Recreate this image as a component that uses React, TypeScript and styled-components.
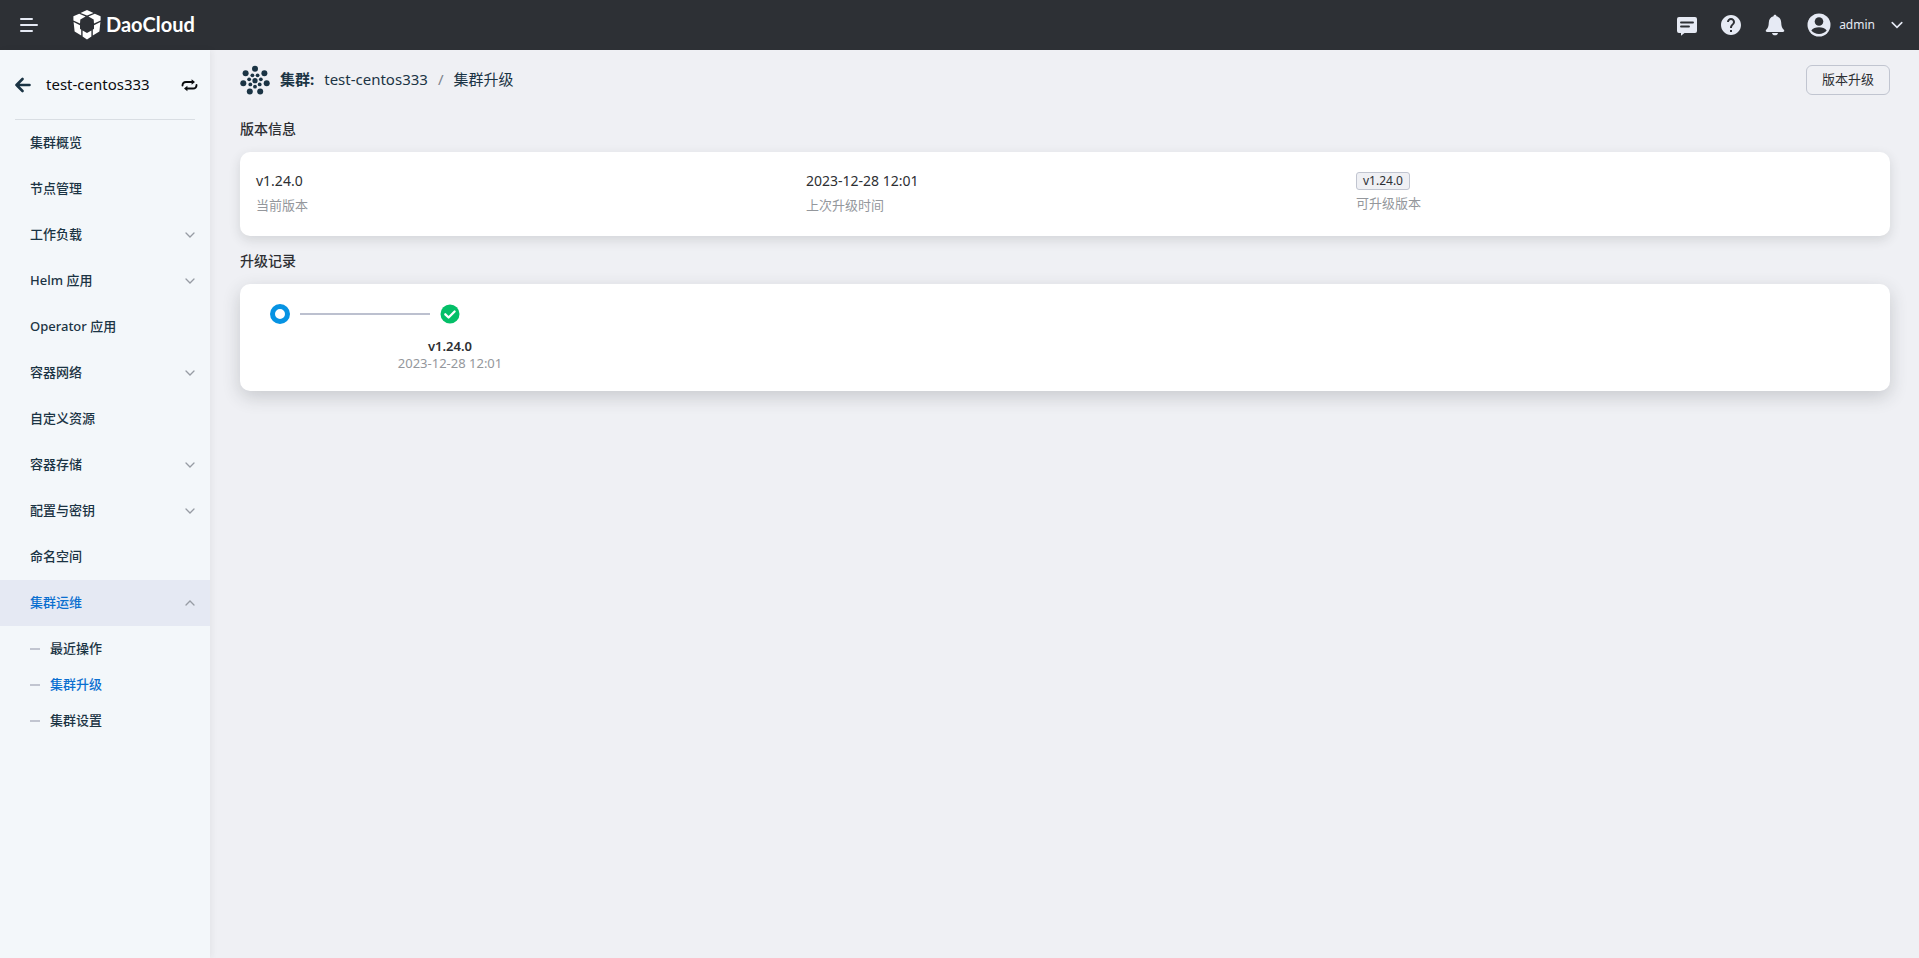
import React from 'react';
import styled, { createGlobalStyle } from 'styled-components';

const GlobalStyle = createGlobalStyle`
  * { box-sizing: border-box; }
  body {
    margin: 0;
    background: #eff0f4;
    color: #2d2f33;
    font-family: 'Noto Sans', 'Noto Sans CJK SC', sans-serif;
    font-size: 13px;
    line-height: 20px;
  }
  button { font: inherit; color: inherit; background: none; border: 0; padding: 0; cursor: pointer; }
  a { color: inherit; text-decoration: none; }
  svg { display: block; flex: none; }
  h1, h2, p, ul, ol, dl, dd { margin: 0; padding: 0; }
  ul, ol { list-style: none; }
`;

const Page = styled.div`
  min-height: 100vh;
  display: flex;
  flex-direction: column;
`;

const TopBar = styled.header`
  height: 50px;
  display: flex;
  align-items: center;
  padding: 0 16px 0 20px;
  background: #2d3035;
  color: #e6eaf4;
`;

const Brand = styled.a`
  display: flex;
  align-items: center;
  gap: 5px;
  margin-left: 35px;
  color: #fff;
  font-family: Lato, 'Noto Sans', sans-serif;
  font-size: 20px;
  line-height: 30px;
  font-weight: 700;
`;

const BrandName = styled.span`
  padding-bottom: 2px;
`;

const TopActions = styled.div`
  display: flex;
  align-items: center;
  gap: 20px;
  margin-left: auto;
`;

const UserButton = styled.button`
  display: flex;
  align-items: center;
  gap: 8px;
  font-size: 12px;
`;

const UserName = styled.span`
  margin-right: 8px;
`;

const Body = styled.div`
  flex: 1;
  display: grid;
  grid-template-columns: 210px minmax(0, 1fr);
`;

const Sidebar = styled.aside`
  background: #f3f7fa;
  box-shadow: 2px 0 6px rgba(45, 48, 53, 0.06);
  color: #1b3444;
`;

const SidebarHead = styled.div`
  display: flex;
  align-items: center;
  height: 70px;
  margin: 0 15px;
  border-bottom: 1px solid #d9dee3;
`;

const ClusterName = styled.span`
  flex: 1;
  margin-left: 15px;
  padding-bottom: 2px;
  color: #0b0c0e;
  font-size: 15px;
`;

const SwapButton = styled.button`
  margin-right: -3px;
`;

const NavLabel = styled.span`
  padding-bottom: 2px;
`;

const NavRow = styled.a<{ $active?: boolean }>`
  display: flex;
  align-items: center;
  justify-content: space-between;
  width: 100%;
  height: 46px;
  padding: 0 15px 0 30px;
  font-weight: 500;
  background: ${(p) => (p.$active ? '#e5e9f3' : 'transparent')};
  color: ${(p) => (p.$active ? '#0a6fd0' : 'inherit')};
`;

const SubNav = styled.ul`
  padding: 5px 0;
`;

const SubLink = styled.a<{ $active?: boolean }>`
  display: flex;
  align-items: center;
  gap: 10px;
  height: 36px;
  padding-left: 30px;
  font-weight: 500;
  color: ${(p) => (p.$active ? '#0a6fd0' : 'inherit')};

  &::before {
    content: '';
    width: 10px;
    height: 2px;
    background: #c1c5d0;
  }
`;

const Main = styled.main`
  padding: 15px 29px 30px 30px;
`;

const PageHead = styled.div`
  display: flex;
  align-items: center;
  justify-content: space-between;
  height: 30px;
  margin-bottom: 9px;
`;

const Crumbs = styled.nav`
  display: flex;
  align-items: center;
  gap: 10px;
  color: #1b3444;
  font-size: 15px;
`;

const CrumbTitle = styled.h1`
  padding-bottom: 2px;
  font-size: 15px;
  font-weight: 700;
`;

const Crumb = styled.a`
  padding-bottom: 2px;
`;

const Slash = styled.span`
  padding-bottom: 2px;
  color: #7d838c;
`;

const OutlineButton = styled.button`
  height: 30px;
  padding: 0 15px 2px;
  border: 1px solid #c1c5d0;
  border-radius: 6px;
`;

const SectionTitle = styled.h2`
  padding-top: 2px;
  font-size: 14px;
  font-weight: 500;
  line-height: 46px;
`;

const InfoCard = styled.dl`
  display: grid;
  grid-template-columns: repeat(3, 1fr);
  height: 84px;
  padding-top: 18px;
  border-radius: 10px;
  background: #fff;
  box-shadow: 0 4px 12px rgba(45, 48, 53, 0.14);
`;

const InfoItem = styled.div`
  display: flex;
  flex-direction: column-reverse;
  justify-content: flex-end;
  align-items: flex-start;
  gap: 3px;
  padding: 0 16px;
`;

const InfoLabel = styled.dt`
  color: #94979c;
`;

const InfoValue = styled.dd`
  font-size: 14px;
  line-height: 22px;
`;

const TagValue = styled.dd`
  margin-top: 2px;
  padding: 0 6px;
  border: 1px solid #c1c5d0;
  border-radius: 3px;
  background: #eff0f4;
  font-size: 12px;
  line-height: 16px;
`;

const HistoryCard = styled.ol`
  display: flex;
  align-items: flex-start;
  height: 107px;
  padding: 20px 30px;
  border-radius: 10px;
  background: #fff;
  box-shadow: 0 6px 18px rgba(45, 48, 53, 0.2);
`;

const Start = styled.li`
  width: 20px;
  height: 20px;
  border: 5px solid #0693e3;
  border-radius: 50%;
`;

const Connector = styled.li`
  width: 130px;
  height: 2px;
  margin: 9px 0 0 10px;
  background: #bcc0cf;
`;

const Step = styled.li`
  display: flex;
  flex-direction: column;
  align-items: center;
  width: 120px;
  margin-left: -40px;
`;

const StepVersion = styled.strong`
  margin-top: 13px;
  font-weight: 600;
  line-height: 18px;
`;

const StepTime = styled.time`
  color: #94979c;
  font-size: 13px;
  line-height: 16px;
`;

const Chevron = ({ up, size = 10, color = '#979ca4' }: { up?: boolean; size?: number; color?: string }) => (
  <svg width={size} height={size} viewBox="0 0 10 10" fill="none" stroke={color} strokeWidth="1.3" strokeLinecap="round">
    <path d={up ? 'M1 7 5 3l4 4' : 'm1 3 4 4 4-4'} />
  </svg>
);

const ring = (count: number, radius: number, turn: number) =>
  Array.from({ length: count }, (_, i) => {
    const a = ((i + turn) / count) * Math.PI * 2;
    return [15 + radius * Math.sin(a), 15.7 - radius * Math.cos(a)];
  });

const ClusterIcon = () => (
  <svg width="30" height="30" viewBox="0 0 30 30" fill="#1b3444">
    <circle cx="15" cy="15.7" r="2.6" />
    {ring(7, 12, 0).map(([x, y]) => <circle key={x} cx={x} cy={y} r="3" />)}
    {ring(7, 6, 0.5).map(([x, y]) => <circle key={x} cx={x} cy={y} r="1.9" />)}
  </svg>
);

const LogoIcon = () => (
  <svg width="28" height="30" viewBox="0 0 28 30" fill="#fff">
    <path d="M14 0 20.500 2.900 14 5.600 7.500 2.900Z" />
    <path d="M6.200 3.700 12.600 6.500 7.300 9.400 7 13.600 .4 10.400V6.200Z" />
    <path d="M21.800 3.700 15.400 6.500 20.700 9.400 21 13.600 27.600 10.400V6.200Z" />
    <path d="M.6 12 7 15.300V18.800L8.200 19.700V25.600L1.600 21.400Z" />
    <path d="M27.400 12 21 15.300V18.800L19.800 19.700V25.600L26.400 21.400Z" />
    <path d="M9.600 20.600 14 23 18.400 20.600V26.500L14 29.400 9.600 26.500Z" />
  </svg>
);

const nav: { label: string; expandable?: boolean; active?: boolean }[] = [
  { label: '集群概览' },
  { label: '节点管理' },
  { label: '工作负载', expandable: true },
  { label: 'Helm 应用', expandable: true },
  { label: 'Operator 应用' },
  { label: '容器网络', expandable: true },
  { label: '自定义资源' },
  { label: '容器存储', expandable: true },
  { label: '配置与密钥', expandable: true },
  { label: '命名空间' },
  { label: '集群运维', expandable: true, active: true },
];

const subNav = [
  { label: '最近操作' },
  { label: '集群升级', active: true },
  { label: '集群设置' },
];

export default function App() {
  return (
    <Page>
      <GlobalStyle />
      <TopBar>
        <button aria-label="菜单">
          <svg width="18" height="14" viewBox="0 0 18 14" stroke="#e6eaf4" strokeWidth="2" strokeLinecap="round">
            <path d="M1 1h11M1 7h16M1 13h11" />
          </svg>
        </button>
        <Brand href="#"><LogoIcon /><BrandName>DaoCloud</BrandName></Brand>
        <TopActions>
          <button aria-label="消息">
            <svg width="24" height="24" viewBox="0 0 24 24">
              <path fill="#e6eaf4" d="M4 4h16a2 2 0 0 1 2 2v12a2 2 0 0 1-2 2H9.5L6 22.7V20H4a2 2 0 0 1-2-2V6a2 2 0 0 1 2-2Z" />
              <path stroke="#2d3035" strokeWidth="1.9" strokeLinecap="round" d="M6 9.5h12M6 13.5h8" />
            </svg>
          </button>
          <button aria-label="帮助">
            <svg width="24" height="24" viewBox="0 0 24 24">
              <path fill="#e6eaf4" d="M12 2C6.48 2 2 6.48 2 12s4.48 10 10 10 10-4.48 10-10S17.52 2 12 2zm1 17h-2v-2h2v2zm2.07-7.75-.9.92C13.45 12.9 13 13.5 13 15h-2v-.5c0-1.1.45-2.1 1.17-2.83l1.24-1.26c.37-.36.59-.86.59-1.41 0-1.1-.9-2-2-2s-2 .9-2 2H8c0-2.21 1.79-4 4-4s4 1.79 4 4c0 .88-.36 1.68-.93 2.25z" />
            </svg>
          </button>
          <button aria-label="通知">
            <svg width="24" height="24" viewBox="0 0 24 24" fill="#e6eaf4">
              <path d="M12 1.8c.9 0 1.4.6 1.5 1.4 2.9.7 4.6 3.1 4.7 6.4.1 3.7.9 5.6 2.6 7.2.9.9.4 2.2-.8 2.2H4c-1.2 0-1.7-1.3-.8-2.2 1.7-1.6 2.5-3.5 2.6-7.2.1-3.3 1.8-5.7 4.7-6.4.1-.8.6-1.4 1.5-1.4Z" />
              <path d="M9 20h6c-.3 1.5-1.4 2.3-3 2.3S9.3 21.5 9 20Z" />
            </svg>
          </button>
          <UserButton>
            <svg width="24" height="24" viewBox="0 0 24 24">
              <circle cx="12" cy="12" r="11.5" fill="#e6eaf4" />
              <circle cx="12" cy="8.5" r="4.3" fill="#2d3035" />
              <path fill="#2d3035" d="M4.3 17.6c1.6-2.2 4.3-3.3 7.7-3.3s6.1 1.1 7.7 3.3c-1.9 2.2-4.6 3.4-7.7 3.4s-5.8-1.2-7.7-3.4Z" />
            </svg>
            <UserName>admin</UserName>
            <Chevron color="#e6eaf4" size={12} />
          </UserButton>
        </TopActions>
      </TopBar>
      <Body>
        <Sidebar>
          <SidebarHead>
            <button aria-label="返回">
              <svg width="16" height="16" viewBox="0 0 16 16" fill="none" stroke="#1b3444" strokeWidth="2.6" strokeLinecap="round" strokeLinejoin="round">
                <path d="M7.5 2 1.5 8l6 6M1.5 8h13" />
              </svg>
            </button>
            <ClusterName>test-centos333</ClusterName>
            <SwapButton aria-label="切换集群">
              <svg width="17" height="14" viewBox="0 0 17 14" fill="none" stroke="#0b0c0e" strokeWidth="1.9" strokeLinecap="round">
                <path d="M1.500 7.500C1.500 5.200 2.600 4 5 4h6.500M15.500 7c0 2.300-1.100 3.500-3.500 3.500H5.500" />
                <path fill="#0b0c0e" stroke="none" d="M10.600 1.300 14 4l-3.400 2.700ZM6.400 7.800 3 10.500l3.400 2.700Z" />
              </svg>
            </SwapButton>
          </SidebarHead>
          <ul>
            {nav.map(({ label, expandable, active }) => (
              <li key={label}>
                {expandable ? (
                  <NavRow as="button" $active={active} aria-expanded={!!active}>
                    <NavLabel>{label}</NavLabel>
                    <Chevron up={active} />
                  </NavRow>
                ) : (
                  <NavRow href="#"><NavLabel>{label}</NavLabel></NavRow>
                )}
              </li>
            ))}
          </ul>
          <SubNav>
            {subNav.map(({ label, active }) => (
              <li key={label}>
                <SubLink href="#" $active={active}><NavLabel>{label}</NavLabel></SubLink>
              </li>
            ))}
          </SubNav>
        </Sidebar>
        <Main>
          <PageHead>
            <Crumbs>
              <ClusterIcon />
              <CrumbTitle>集群:</CrumbTitle>
              <Crumb href="#">test-centos333</Crumb>
              <Slash>/</Slash>
              <Crumb as="span">集群升级</Crumb>
            </Crumbs>
            <OutlineButton>版本升级</OutlineButton>
          </PageHead>
          <SectionTitle>版本信息</SectionTitle>
          <InfoCard>
            <InfoItem>
              <InfoLabel>当前版本</InfoLabel>
              <InfoValue>v1.24.0</InfoValue>
            </InfoItem>
            <InfoItem>
              <InfoLabel>上次升级时间</InfoLabel>
              <InfoValue>2023-12-28 12:01</InfoValue>
            </InfoItem>
            <InfoItem>
              <InfoLabel>可升级版本</InfoLabel>
              <TagValue>v1.24.0</TagValue>
            </InfoItem>
          </InfoCard>
          <SectionTitle>升级记录</SectionTitle>
          <HistoryCard>
            <Start aria-label="开始" />
            <Connector aria-hidden="true" />
            <Step>
              <svg width="20" height="20" viewBox="0 0 20 20" fill="none">
                <circle cx="10" cy="10" r="9.5" fill="#04bf68" />
                <path d="m5.3 10.3 3.3 3.2 6-6" stroke="#fff" strokeWidth="2.3" strokeLinecap="round" strokeLinejoin="round" />
              </svg>
              <StepVersion>v1.24.0</StepVersion>
              <StepTime>2023-12-28 12:01</StepTime>
            </Step>
          </HistoryCard>
        </Main>
      </Body>
    </Page>
  );
}
